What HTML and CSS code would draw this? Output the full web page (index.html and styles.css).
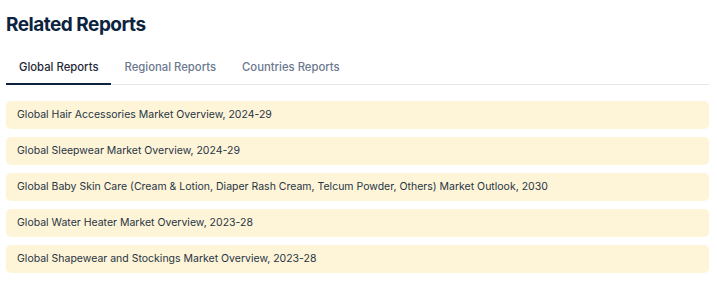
FILE: index.html
```html
<!DOCTYPE html>
<html lang="en">
<head>
    <meta charset="UTF-8">
    <meta name="viewport" content="width=device-width, initial-scale=1.0">
    <title>Related Reports</title>
    <link rel="stylesheet" href="styles.css">
</head>
<body>
    <section class="related">
        <h2 class="related-title">Related Reports</h2>
        <div class="tabs">
            <a class="tab active" href="#">Global Reports</a>
            <a class="tab" href="#">Regional Reports</a>
            <a class="tab" href="#">Countries Reports</a>
        </div>
        <ul class="report-list">
            <li class="report-item">Global Hair Accessories Market Overview, 2024-29</li>
            <li class="report-item">Global Sleepwear Market Overview, 2024-29</li>
            <li class="report-item">Global Baby Skin Care (Cream &amp; Lotion, Diaper Rash Cream, Telcum Powder, Others) Market Outlook, 2030</li>
            <li class="report-item">Global Water Heater Market Overview, 2023-28</li>
            <li class="report-item">Global Shapewear and Stockings Market Overview, 2023-28</li>
        </ul>
    </section>
</body>
</html>
```

FILE: styles.css
```css
body {
    margin: 0;
    padding: 0 8px 0 6px;
    font-family: Inter, "Noto Sans", sans-serif;
    background-color: #ffffff;
}

.related-title {
    margin: 13px 0 0;
    font-size: 19px;
    font-weight: 700;
    line-height: 24px;
    letter-spacing: -0.5px;
    color: #0c2340;
}

.tabs {
    display: flex;
    margin-top: 19px;
    border-bottom: 1px solid #e5e7eb;
}

.tab {
    padding: 4px 13px 9px;
    font-size: 11.3px;
    font-weight: 500;
    line-height: 14px;
    color: #6b7890;
    text-decoration: none;
    border-bottom: 2px solid transparent;
    margin-bottom: -1px;
}

.tab.active {
    color: #1f2937;
    border-bottom-color: #0c2340;
}

.report-list {
    list-style: none;
    margin: 16px 0 0;
    padding: 0;
    display: flex;
    flex-direction: column;
    gap: 8px;
}

.report-item {
    background-color: #fef4d8;
    border-radius: 5px;
    padding: 7px 11px;
    font-size: 10.5px;
    line-height: 14px;
    color: #273444;
}
```
